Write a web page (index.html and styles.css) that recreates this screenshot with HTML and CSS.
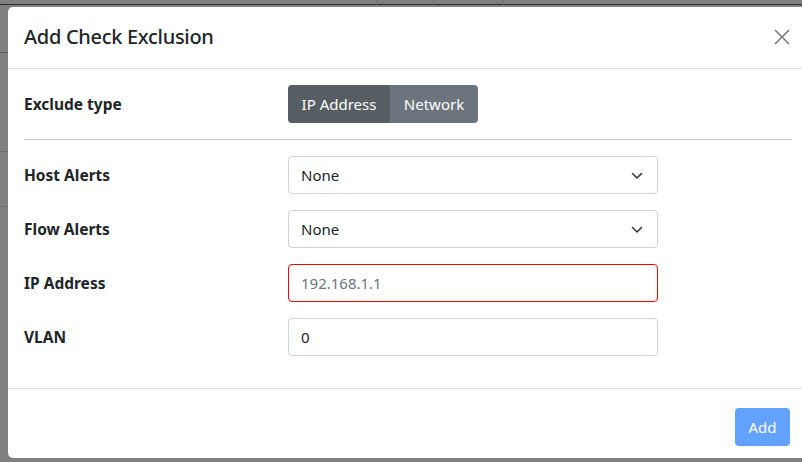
FILE: index.html
```html
<!DOCTYPE html>
<html>
<head>
<meta charset="utf-8">
<link rel="stylesheet" href="styles.css">
</head>
<body>
<div class="backdrop">
  <div class="bg-line bg-h1"></div>
  <div class="bg-line bg-v1"></div>
  <div class="bg-line bg-v2"></div>
  <div class="bg-line bg-v3"></div>
  <div class="bg-line bg-l1"></div>
  <div class="bg-line bg-l2"></div>
  <div class="bg-line bg-l3"></div>
</div>
<div class="modal">
  <div class="modal-header">
    <h5 class="modal-title">Add Check Exclusion</h5>
    <button class="btn-close" aria-label="Close">
      <svg width="16" height="16" viewBox="0 0 16 16"><path d="M1 1L15 15M15 1L1 15" stroke="#7a7a7a" stroke-width="1.6" fill="none"/></svg>
    </button>
  </div>
  <div class="modal-body">
    <div class="row">
      <label class="lbl">Exclude type</label>
      <div class="btn-group">
        <button class="seg active">IP Address</button>
        <button class="seg">Network</button>
      </div>
    </div>
    <hr class="sep">
    <div class="form-rows">
      <div class="row">
        <label class="lbl">Host Alerts</label>
        <div class="select">None<svg class="chev" width="12" height="8" viewBox="0 0 12 8"><path d="M1.5 1.5L6 6L10.5 1.5" stroke="#343a40" stroke-width="1.6" fill="none" stroke-linecap="round" stroke-linejoin="round"/></svg></div>
      </div>
      <div class="row">
        <label class="lbl">Flow Alerts</label>
        <div class="select">None<svg class="chev" width="12" height="8" viewBox="0 0 12 8"><path d="M1.5 1.5L6 6L10.5 1.5" stroke="#343a40" stroke-width="1.6" fill="none" stroke-linecap="round" stroke-linejoin="round"/></svg></div>
      </div>
      <div class="row">
        <label class="lbl">IP Address</label>
        <div class="input invalid"><span class="ph">192.168.1.1</span></div>
      </div>
      <div class="row">
        <label class="lbl">VLAN</label>
        <div class="input">0</div>
      </div>
    </div>
  </div>
  <div class="modal-footer">
    <button class="btn-add">Add</button>
  </div>
</div>
</body>
</html>
```
FILE: styles.css
```css
html, body {
  margin: 0;
  padding: 0;
  width: 802px;
  height: 462px;
  overflow: hidden;
  background: #808080;
  font-family: "Noto Sans", "Open Sans", sans-serif;
  color: #212529;
}
.backdrop {
  position: absolute;
  inset: 0;
}
.bg-line { position: absolute; background: #2a2a2a; }
.bg-h1 { left: 0; right: 0; top: 4px; height: 1px; }
.bg-v1 { left: 376px; top: 0; width: 1px; height: 5px; background: #6a6a6a; }
.bg-v2 { left: 433px; top: 0; width: 1px; height: 5px; background: #6a6a6a; }
.bg-v3 { left: 503px; top: 0; width: 1px; height: 5px; background: #6a6a6a; }
.bg-l1 { left: 0; width: 8px; top: 52px; height: 1px; background: #5a5a5a; }
.bg-l2 { left: 0; width: 8px; top: 151px; height: 1px; background: #6e6e6e; }
.bg-l3 { left: 0; width: 8px; top: 206px; height: 1px; background: #6e6e6e; }

.modal {
  position: absolute;
  left: 8px;
  top: 7px;
  width: 800px;
  height: 451px;
  background: #fff;
  border-radius: 5px;
  display: flex;
  flex-direction: column;
  box-sizing: border-box;
}
.modal-header {
  display: flex;
  align-items: center;
  justify-content: space-between;
  height: 62px;
  padding: 0 16px 2px 16px;
  border-bottom: 1px solid #dee2e6;
  box-sizing: border-box;
}
.modal-title {
  margin: 0;
  font-size: 20px;
  font-weight: 500;
  letter-spacing: -0.3px;
  color: #212529;
}
.btn-close {
  border: 0;
  background: none;
  padding: 0;
  margin-right: 1px;
  width: 18px;
  height: 18px;
  display: flex;
  align-items: center;
  justify-content: center;
}
.modal-body {
  flex: 1;
  padding: 16px 16px 0 16px;
}
.row {
  display: flex;
  align-items: center;
}
.lbl {
  width: 264px;
  font-weight: 700;
  font-size: 15.5px;
}
.btn-group {
  display: flex;
  border-radius: 4px;
  overflow: hidden;
  height: 38px;
}
.seg {
  border: 0;
  font-family: inherit;
  font-size: 15px;
  color: #fff;
  background: #6c757d;
  padding: 0 12px;
}
.seg.active {
  background: #565e64;
  width: 102px;
}
.seg:not(.active) { width: 88px; }
.sep {
  border: 0;
  border-top: 1px solid #c8c8c8;
  margin: 16px 0 16px 0;
}
.form-rows {
  display: flex;
  flex-direction: column;
  gap: 16px;
}
.select, .input {
  position: relative;
  box-sizing: border-box;
  width: 370px;
  height: 38px;
  border: 1px solid #ced4da;
  border-radius: 4px;
  padding: 0 12px;
  display: flex;
  align-items: center;
  font-size: 15px;
  color: #212529;
}
.chev {
  position: absolute;
  right: 14px;
  top: 15px;
}
.input.invalid { border-color: #ff0000; }
.ph { color: #6c757d; }
.modal-footer {
  height: 70px;
  border-top: 1px solid #dee2e6;
  display: flex;
  justify-content: flex-end;
  align-items: center;
  padding: 0 18px;
  box-sizing: border-box;
}
.btn-add {
  border: 0;
  border-radius: 4px;
  background: #62a1fe;
  color: #fff;
  font-family: inherit;
  font-size: 15px;
  width: 55px;
  height: 38px;
  margin-top: 6px;
}
```
